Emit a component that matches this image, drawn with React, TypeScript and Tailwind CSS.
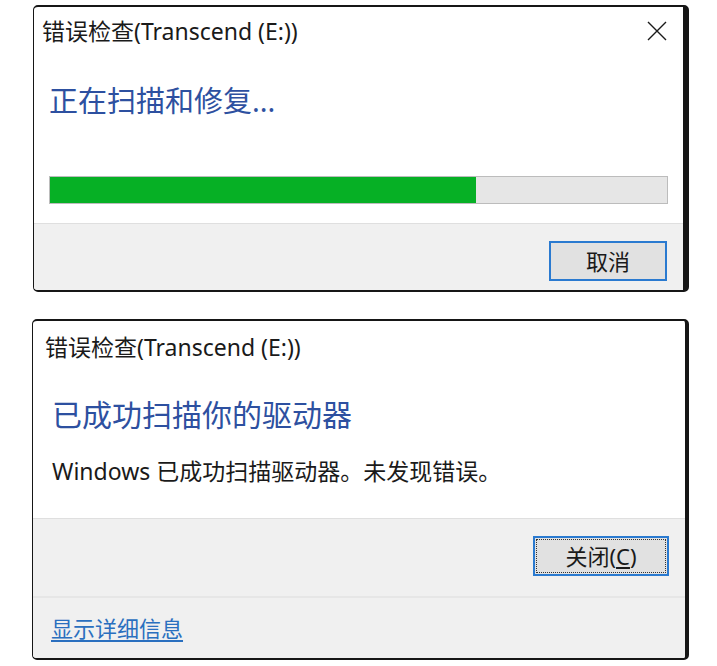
import React from 'react';

const FONT = '"Noto Sans", "Noto Sans CJK SC", sans-serif';

function CloseIcon() {
  return (
    <svg width="20" height="20" viewBox="0 0 20 20" className="shrink-0">
      <path d="M1 1 L19 19 M19 1 L1 19" stroke="#1a1a1a" strokeWidth="1.4" fill="none" />
    </svg>
  );
}

function ScanningDialog() {
  return (
    <div className="w-[656px] h-[287px] bg-white border-l border-t-2 border-r-[6px] border-b-2 border-[#161616] rounded-[5px] flex flex-col overflow-hidden">
      {/* title bar */}
      <div className="h-[48px] flex items-center justify-between pl-[8px] pr-[16px] shrink-0">
        <span className="text-[23px] text-[#1a1a1a] leading-none">错误检查(Transcend (E:))</span>
        <CloseIcon />
      </div>

      <div className="flex flex-col px-[15px] flex-1">
        <div className="mt-[27px] h-[36px] flex items-center text-[29px] leading-none text-[#2d50a0]">
          正在扫描和修复...
        </div>
        <div className="mt-[58px] h-[28px] bg-[#e6e6e6] border border-[#bcbcbc] flex">
          <div className="h-full w-[69%] bg-[#06b025]" />
        </div>
      </div>

      {/* footer */}
      <div className="h-[67px] bg-[#f0f0f0] border-t border-[#dfdfdf] flex items-start justify-end pr-[16px] pt-[17px] shrink-0">
        <button className="w-[118px] h-[40px] bg-[#e1e1e1] border-2 border-[#2a7ad0] text-[22px] leading-none text-[#1a1a1a] flex items-center justify-center">
          取消
        </button>
      </div>
    </div>
  );
}

function DoneDialog() {
  return (
    <div className="w-[657px] h-[341px] bg-white border-l border-t-2 border-r-[4px] border-b-2 border-[#161616] rounded-[5px] flex flex-col overflow-hidden">
      <div className="h-[52px] flex items-center pl-[12px] shrink-0">
        <span className="text-[23px] text-[#1a1a1a] leading-none">错误检查(Transcend (E:))</span>
      </div>

      <div className="flex flex-col pl-[19px] flex-1">
        <div className="mt-[22px] h-[40px] flex items-center text-[30px] leading-none text-[#2d50a0]">
          已成功扫描你的驱动器
        </div>
        <div className="mt-[22px] h-[28px] flex items-center text-[23px] leading-none text-[#1a1a1a]">
          Windows 已成功扫描驱动器。未发现错误。
        </div>
      </div>

      <div className="h-[78px] bg-[#f0f0f0] border-t border-[#dfdfdf] flex items-start justify-end pr-[16px] pt-[17px] shrink-0">
        <button className="w-[136px] h-[40px] bg-[#e1e1e1] border-2 border-[#2a7ad0] p-[1px] flex">
          <span className="flex-1 border border-dotted border-[#333] flex items-center justify-center text-[22px] leading-none text-[#1a1a1a]">
            关闭(<span className="underline underline-offset-2">C</span>)
          </span>
        </button>
      </div>

      <div className="h-[62px] bg-[#f0f0f0] border-t-2 border-[#e6e6e6] flex items-center pl-[18px] shrink-0">
        <a className="text-[22px] leading-none text-[#2a6fbf] underline underline-offset-[3px] cursor-pointer">
          显示详细信息
        </a>
      </div>
    </div>
  );
}

export default function App() {
  return (
    <div className="w-[717px] h-[666px] bg-white overflow-hidden" style={{ fontFamily: FONT }}>
      <div className="pt-[5px] pl-[33px]">
        <ScanningDialog />
      </div>
      <div className="pt-[27px] pl-[32px]">
        <DoneDialog />
      </div>
    </div>
  );
}
